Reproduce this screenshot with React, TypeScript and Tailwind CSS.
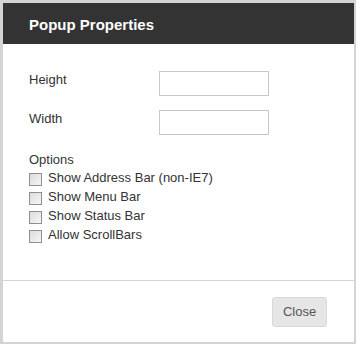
import { useState } from "react";

const options = [
  "Show Address Bar (non-IE7)",
  "Show Menu Bar",
  "Show Status Bar",
  "Allow ScrollBars",
];

export default function App() {
  const [checked, setChecked] = useState<boolean[]>(options.map(() => false));

  const toggle = (i: number) => {
    setChecked((prev) => prev.map((v, idx) => (idx === i ? !v : v)));
  };

  return (
    <div
      className="w-[358px] h-[346px] bg-white"
      style={{ fontFamily: '"Liberation Sans", Arial, sans-serif' }}
    >
      <div className="w-[356px] h-[344px] flex flex-col border-l-[3px] border-t-[3px] border-r-2 border-b-2 border-[#d4d4d4] bg-white">
        {/* header */}
        <div className="h-[41px] shrink-0 flex items-center bg-[#333333] pl-[26px] pt-[2px]">
          <span className="text-[15px] font-bold text-white leading-none">Popup Properties</span>
        </div>

        {/* body */}
        <div className="h-[236px] shrink-0 pl-[26px] pt-[27px] text-[13px] text-[#333333]">
          <div className="flex items-start">
            <label className="w-[130px] mt-px leading-[16px]">Height</label>
            <input className="w-[110px] h-[25px] border border-[#c8c8c8] bg-white outline-none px-1" />
          </div>
          <div className="flex items-start mt-[14px]">
            <label className="w-[130px] mt-px leading-[16px]">Width</label>
            <input className="w-[110px] h-[25px] border border-[#c8c8c8] bg-white outline-none px-1" />
          </div>

          <div className="mt-[17px] leading-[16px]">Options</div>
          <div className="flex flex-col">
            {options.map((opt, i) => (
              <div
                key={opt}
                className="flex items-start h-[19px] cursor-default"
                onClick={() => toggle(i)}
              >
                <span className="w-[13px] h-[13px] mt-[5px] mr-[6px] border border-[#8e8f8f] bg-gradient-to-br from-[#dcdcdc] to-[#f6f6f6] flex items-center justify-center text-[10px] leading-none text-[#333]">
                  {checked[i] ? "✓" : ""}
                </span>
                <span className="leading-[19px] whitespace-nowrap">{opt}</span>
              </div>
            ))}
          </div>
        </div>

        {/* footer */}
        <div className="flex-1 flex items-center justify-end border-t border-[#d4d4d4] pr-[27px]">
          <button className="w-[55px] h-[30px] rounded-[3px] border border-[#d9d9d9] bg-[#e6e6e6] text-[13px] text-[#555555]">
            Close
          </button>
        </div>
      </div>
    </div>
  );
}
